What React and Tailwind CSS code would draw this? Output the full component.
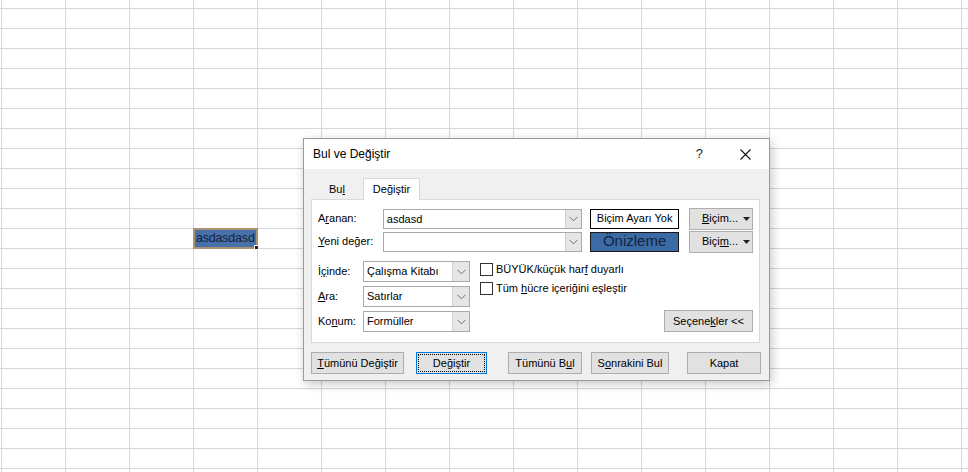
import { useState } from "react";

function Chevron() {
  return (
    <svg width="9" height="6" viewBox="0 0 9 6" className="block">
      <polyline points="0.5,0.8 4.5,4.8 8.5,0.8" fill="none" stroke="#707070" strokeWidth="1" />
    </svg>
  );
}

function Caret() {
  return (
    <svg width="7" height="4" viewBox="0 0 7 4" className="block">
      <polygon points="0,0 7,0 3.5,4" fill="#222" />
    </svg>
  );
}

function Combo({ value, width }) {
  return (
    <div className={`flex h-[20px] border border-[#a9a9a9] bg-white ${width}`}>
      <div className="flex-1 pl-[3px] leading-[18px] truncate">{value}</div>
      <div className="flex w-[16px] items-center justify-center border-l border-[#cfcfcf] bg-[#e6e6e6]">
        <Chevron />
      </div>
    </div>
  );
}

function Select({ value }) {
  return (
    <div className="flex h-[21px] w-[107px] border border-[#a9a9a9] bg-white">
      <div className="flex-1 pl-[3px] leading-[19px]">{value}</div>
      <div className="flex w-[17px] items-center justify-center border-l border-[#cfcfcf] bg-[#e6e6e6]">
        <Chevron />
      </div>
    </div>
  );
}

function Btn({ children, width, focused }) {
  if (focused) {
    return (
      <div className={`h-[22px] border border-[#0078d7] bg-[#e1e1e1] p-[1px] ${width}`}>
        <div className="flex h-full items-center justify-center border border-dotted border-black">
          {children}
        </div>
      </div>
    );
  }
  return (
    <div className={`flex h-[22px] items-center justify-center border border-[#adadad] bg-[#e1e1e1] ${width}`}>
      {children}
    </div>
  );
}

function Check({ children }) {
  return (
    <div className="flex h-[17px] items-center gap-[3px]">
      <div className="h-[13px] w-[13px] border border-[#333] bg-white" />
      <span>{children}</span>
    </div>
  );
}

function FindReplace() {
  const [tab] = useState("replace");
  return (
    <div className="absolute left-[303px] top-[138px] h-[243px] w-[467px] border border-[#9a9a9a] bg-[#f0f0f0] text-[11px] text-black shadow-[2px_3px_10px_rgba(0,0,0,0.22)]">
      {/* title bar */}
      <div className="flex h-[30px] items-center bg-white pl-[9px]">
        <span className="flex-1 text-[12px]">Bul ve Değiştir</span>
        <span className="mr-[37px] text-[13px] text-[#222]">?</span>
        <svg width="11" height="11" viewBox="0 0 11 11" className="mr-[18px]">
          <path d="M0.5 0.5 L10.5 10.5 M10.5 0.5 L0.5 10.5" stroke="#111" strokeWidth="1.1" />
        </svg>
      </div>

      <div className="px-[7px] pt-[8px]">
        {/* tabs */}
        <div className="flex h-[22px] items-end">
          <div className="flex h-[20px] w-[52px] items-center justify-center">
            Bu<u>l</u>
          </div>
          <div className={`-mb-px flex h-[22px] w-[57px] items-center justify-center border border-b-0 border-[#d9d9d9] ${tab === "replace" ? "bg-white" : ""} z-10`}>
            De<u>ğ</u>iştir
          </div>
        </div>

        {/* panel */}
        <div className="h-[144px] w-[449px] border border-[#d9d9d9] bg-white px-[6px] pt-[8px]">
          <div className="flex h-[21px] items-center">
            <span className="w-[65px]">A<u>r</u>anan:</span>
            <Combo value="asdasd" width="w-[200px]" />
            <div className="ml-[8px] flex h-[20px] w-[89px] items-center justify-center border border-black">
              Biçim Ayarı Yok
            </div>
            <div className="ml-[10px]">
              <Btn width="w-[64px]">
                <span className="flex items-center gap-[5px] pl-[10px]">
                  <span><u>B</u>içim...</span>
                  <Caret />
                </span>
              </Btn>
            </div>
          </div>
          <div className="mt-[2px] flex h-[21px] items-center">
            <span className="w-[65px]"><u>Y</u>eni değer:</span>
            <Combo value="" width="w-[200px]" />
            <div className="ml-[8px] flex h-[20px] w-[89px] items-center justify-center border border-[#1a1a1a] bg-[#3c6aa5] text-[15px] text-[#15233f]">
              Önizleme
            </div>
            <div className="ml-[10px]">
              <Btn width="w-[64px]">
                <span className="flex items-center gap-[5px] pl-[10px]">
                  <span>Biçi<u>m</u>...</span>
                  <Caret />
                </span>
              </Btn>
            </div>
          </div>

          <div className="mt-[9px] flex">
            <div className="flex flex-col gap-[4px]">
              <div className="flex items-center">
                <span className="w-[45px]">İ<u>ç</u>inde:</span>
                <Select value="Çalışma Kitabı" />
              </div>
              <div className="flex items-center">
                <span className="w-[45px]"><u>A</u>ra:</span>
                <Select value="Satırlar" />
              </div>
              <div className="flex items-center">
                <span className="w-[45px]">Ko<u>n</u>um:</span>
                <Select value="Formüller" />
              </div>
            </div>
            <div className="ml-[10px] flex flex-1 flex-col gap-[2px]">
              <Check>BÜYÜK/küçük har<u>f</u> duyarlı</Check>
              <Check>Tüm <u>h</u>ücre içeriğini eşleştir</Check>
              <div className="mt-auto flex justify-end">
                <Btn width="w-[89px]">
                  <span>Seçene<u>k</u>ler &lt;&lt;</span>
                </Btn>
              </div>
            </div>
          </div>
        </div>

        {/* bottom buttons */}
        <div className="mt-[9px] flex">
          <Btn width="w-[93px]">
            <span><u>T</u>ümünü Değiştir</span>
          </Btn>
          <div className="ml-[12px]">
            <Btn width="w-[71px]" focused>
              <span>De<u>ğ</u>iştir</span>
            </Btn>
          </div>
          <div className="ml-[21px]">
            <Btn width="w-[74px]">
              <span>Tümünü B<u>u</u>l</span>
            </Btn>
          </div>
          <div className="ml-[9px]">
            <Btn width="w-[78px]">
              <span>S<u>o</u>nrakini Bul</span>
            </Btn>
          </div>
          <div className="ml-[18px]">
            <Btn width="w-[74px]">
              <span>Kapat</span>
            </Btn>
          </div>
        </div>
      </div>
    </div>
  );
}

export default function App() {
  return (
    <div className="relative h-[472px] w-[968px] overflow-hidden bg-white font-['Liberation_Sans',Arial,sans-serif] bg-[linear-gradient(to_right,#d6d5df_1px,transparent_1px),linear-gradient(to_bottom,#d6d5df_1px,transparent_1px)] bg-[size:64px_20px] bg-[position:1px_8px]">
      {/* sheet cells */}
      <div className="grid grid-cols-[repeat(15,64px)] auto-rows-[20px] pl-px pt-[8px]">
        <div className="relative col-start-4 row-start-12 h-[21px] w-[65px] border-2 border-[#ab9271] bg-[#4771a8]">
          <div className="whitespace-nowrap pl-[1px] text-[12.5px] leading-[17px] tracking-[-0.2px] text-[#14223f]">
            asdasdasd
          </div>
          <div className="absolute -bottom-[3px] -right-[3px] h-[5px] w-[5px] border border-white bg-[#1d1d1d]" />
        </div>
      </div>

      <FindReplace />
    </div>
  );
}
